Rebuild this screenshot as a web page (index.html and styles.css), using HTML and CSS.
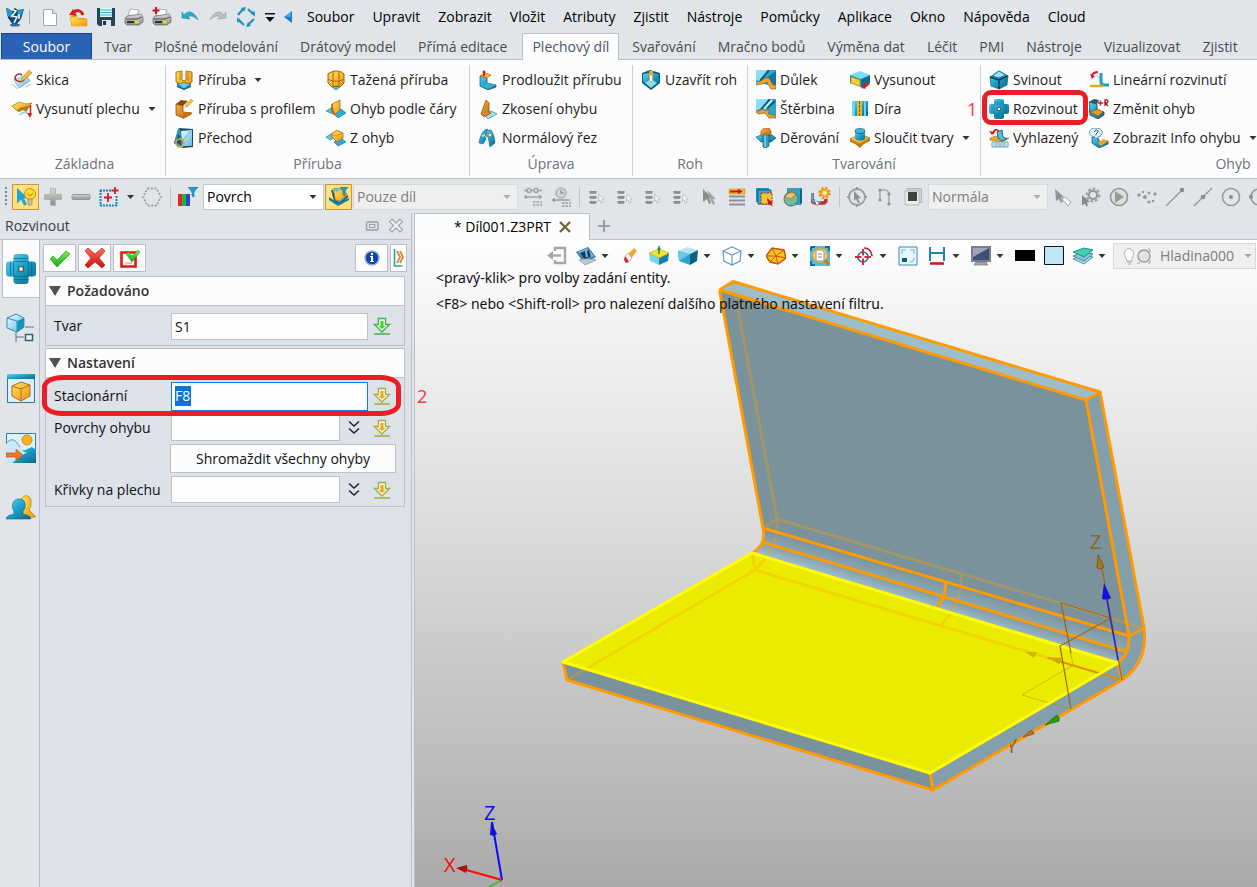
FILE: index.html
```html
<!DOCTYPE html>
<html lang="cs">
<head>
<meta charset="utf-8">
<title>Díl001.Z3PRT</title>
<link rel="stylesheet" href="styles.css">
</head>
<body>
<svg class="sprite" aria-hidden="true">
<defs>
<linearGradient id="b" x1="0" y1="0" x2="1" y2="1"><stop offset="0" stop-color="#5fd2f2"/><stop offset=".5" stop-color="#1a9ec6"/><stop offset="1" stop-color="#08678c"/></linearGradient>
<linearGradient id="lb" x1="0" y1="0" x2="1" y2="1"><stop offset="0" stop-color="#f4fcff"/><stop offset="1" stop-color="#5cb9dc"/></linearGradient>
<linearGradient id="y" x1="0" y1="0" x2="1" y2="1"><stop offset="0" stop-color="#ffe45c"/><stop offset="1" stop-color="#ee9412"/></linearGradient>
<linearGradient id="o" x1="0" y1="0" x2="1" y2="1"><stop offset="0" stop-color="#f8b03c"/><stop offset="1" stop-color="#b6670c"/></linearGradient>
<linearGradient id="g" x1="0" y1="0" x2="0" y2="1"><stop offset="0" stop-color="#d8d8d8"/><stop offset="1" stop-color="#8c8c8c"/></linearGradient>
<linearGradient id="gr" x1="0" y1="0" x2="0" y2="1"><stop offset="0" stop-color="#7dee4c"/><stop offset="1" stop-color="#0fae1c"/></linearGradient>
<linearGradient id="rd" x1="0" y1="0" x2="0" y2="1"><stop offset="0" stop-color="#ff6a5a"/><stop offset="1" stop-color="#c8120c"/></linearGradient>
</defs>
<symbol id="logo" viewBox="0 0 20 20"><path d="M1 1l6 2 3-2 3 2 6-1-3 10-5 6H8L3 11z" fill="#1b4a68"/><path d="M1 1l6 2 1 8-5-2zM13 3l6-1-4 8-3-1z" fill="#1e9bd2"/><path d="M5 2l6 2-4 5 5 1-3 6M14 7v5" stroke="#eef5f8" stroke-width="1.600" fill="none"/><ellipse cx="10" cy="18" rx="5" ry="1.500" fill="#2b6d94"/></symbol>
<symbol id="new" viewBox="0 0 20 20"><path d="M3.500 2.500h9l4 4v12h-13z" fill="#fff" stroke="#9aa6b0"/><path d="M12.500 2.500v4h4" fill="#dde6ec" stroke="#9aa6b0"/></symbol>
<symbol id="open" viewBox="0 0 20 20"><path d="M3 9h5l2 2h7v8H3z" fill="#e2970d"/><path d="M2 10h7l2 2h8v7H4z" fill="url(#y)" stroke="#e8a31c" stroke-width=".6"/><path d="M15 8C13 3 8 2 5 6" fill="none" stroke="#dc1b12" stroke-width="3"/><path d="M1 8l8 1-4-7z" fill="#dc1b12"/></symbol>
<symbol id="save" viewBox="0 0 20 20"><path d="M1 1h18v18H3l-2-2z" fill="#2a4256"/><path d="M4 1h12v9H4z" fill="#e8f7fd"/><path d="M4 3h12M4 5.500h12M4 8h12" stroke="#48a9cd"/><path d="M6 13h9v6H6z" fill="#dfe5ea"/><path d="M7 14h3v4H7z" fill="#1d3142"/></symbol>
<symbol id="print" viewBox="0 0 20 20"><path d="M6 2l9 1-2 6H4z" fill="#fff" stroke="#9a9a9a" stroke-width=".8"/><path d="M3 9l14-2 2 3v5l-4 3H3l-2-2v-5z" fill="url(#g)" stroke="#555" stroke-width=".6"/><path d="M2 12h11l5-2" stroke="#4c4c4c" fill="none"/><path d="M3 15h9" stroke="#333" stroke-width="2"/><ellipse cx="12.500" cy="15" rx="2.400" ry="1.500" fill="#f0dc18"/></symbol>
<symbol id="printp" viewBox="0 0 20 20"><path d="M6 2l9 1-2 6H4z" fill="#fff" stroke="#9a9a9a" stroke-width=".8"/><path d="M3 9l14-2 2 3v5l-4 3H3l-2-2v-5z" fill="url(#g)" stroke="#555" stroke-width=".6"/><path d="M2 12h11l5-2" stroke="#4c4c4c" fill="none"/><path d="M3 15h9" stroke="#333" stroke-width="2"/><ellipse cx="12.500" cy="15" rx="2.400" ry="1.500" fill="#f0dc18"/><path d="M4 0v7M.500 3.500h7" stroke="#d3141f" stroke-width="2"/></symbol>
<symbol id="undo" viewBox="0 0 20 20"><path d="M4 8c4-5 10-4 14 5-4-4-8-5-10-3l2 2-8-1V5z" fill="#2eaad2" stroke="#1789ae" stroke-width=".6"/></symbol>
<symbol id="redo" viewBox="0 0 20 20"><path d="M16 8C12 3 6 4 2 13c4-4 8-5 10-3l-2 2 8-1V5z" fill="#bcbfc2" stroke="#94989b" stroke-width=".6"/></symbol>
<symbol id="rotate" viewBox="0 0 20 20"><g fill="none" stroke="#1f95bb" stroke-width="2.200"><path d="M2 8L7 2M12 2l6 6M18 12l-6 6M8 18l-6-6"/></g><path d="M5 1l5-1-2 5zM15 4l4 1v5zM15 19l-5 1 2-5zM5 16l-4-1v-5z" fill="#1f95bb"/></symbol>
<symbol id="qdrop" viewBox="0 0 20 20"><path d="M5 6h10v1.500H5zM5.500 10h9L10 15z" fill="#111"/></symbol>
<symbol id="left" viewBox="0 0 20 20"><path d="M14 4v12l-8-6z" fill="#1976c8"/><path d="M13 5v5H7z" fill="#36a9f0"/></symbol>
<symbol id="sketch" viewBox="0 0 20 20"><path d="M2 10l12-5 4 6-11 7z" fill="url(#lb)" stroke="#77a9c0" stroke-width=".7"/><path d="M0 14l6 5M14 17l5-3" stroke="#9ab7c4"/><path d="M10 5C6 2 1 7 4 10s8 1 8-1" fill="none" stroke="#a02c28" stroke-width="1.600"/><path d="M8 12l2-4 7-8 3 3-8 7z" fill="url(#y)" stroke="#b06a12" stroke-width=".5"/></symbol>
<symbol id="sheet" viewBox="0 0 20 20"><path d="M0 7l7-4 7 2 6-1-6 5-6 1-3 2z" fill="url(#y)" stroke="#9a5a10" stroke-width=".6"/><path d="M5 12l3-3 7-2 4-1-5 7-3-2-4 2z" fill="#b97a24"/><path d="M6 17l4-4 5-1 1 3-3-1z" fill="#a8c4ce"/><path d="M18.500 6v11" stroke="#cf2020" stroke-width="1.500"/><path d="M15 14h5l-2 5z" fill="#cf2020"/></symbol>
<symbol id="flange" viewBox="0 0 20 20"><path d="M3 14l7-3 7 3-7 5z" fill="#5fd0ee" stroke="#0c627f"/><path d="M3 15v2l7 3 7-3v-2l-7 4z" fill="#0a5f7d"/><path d="M2 2l6-1v9l2 1 2-1V1l6 1v10l-4 2-4-2-4 2-4-2z" fill="url(#y)" stroke="#9d5c0c" stroke-width=".8"/><path d="M6 1v9M14 1v9" stroke="#c88220"/></symbol>
<symbol id="flangep" viewBox="0 0 20 20"><path d="M2 5l7 2v6l9 1-9 5-7-3z" fill="url(#o)" stroke="#7f430a" stroke-width=".7"/><path d="M9 14l8-1v3l-8 4z" fill="#c7720f"/><path d="M2 5l5-4 7 1-5 5z" fill="#8a480c"/><path d="M11 7l6-7 2 2-6 6z" fill="#f8c83b" stroke="#b06a12" stroke-width=".5"/></symbol>
<symbol id="trans" viewBox="0 0 20 20"><path d="M5 0l14 1v18l-10 1L0 15z" fill="#124d6b"/><path d="M7 3l11-1v16H8z" fill="url(#lb)"/><path d="M5 1L1 15l8 4M5 1l3 15" stroke="#2d93b9" stroke-width="2" fill="none"/><circle cx="6" cy="15" r="4" fill="none" stroke="#eba423" stroke-width="1.600"/><path d="M9 12l8-9" stroke="#5fb0cc"/></symbol>
<symbol id="swept" viewBox="0 0 20 20"><path d="M5 16l5-2 5 2-5 4z" fill="#4cbede" stroke="#0d637f" stroke-width=".6"/><path d="M2 4c5-4 12-4 16 0v9l-4 4q-4-2-8 0l-4-4z" fill="url(#y)" stroke="#9d5c0c"/><path d="M7 2v14M13 2v14M2 9c5 3 11 3 16 0" stroke="#a96710" fill="none"/></symbol>
<symbol id="bendline" viewBox="0 0 20 20"><path d="M0 12l7-4 3 4-3 3z" fill="#58c3de" stroke="#0e7798" stroke-width=".6"/><path d="M7 14l8-4 5 4-8 5z" fill="#2cacd4" stroke="#0e6c8a" stroke-width=".6"/><path d="M6 5l8-4v10l-6 5z" fill="url(#y)" stroke="#9d5c0c" stroke-width=".7"/><path d="M6 5v7l3 4" stroke="#b36410" stroke-width="1.500" fill="none"/></symbol>
<symbol id="zbend" viewBox="0 0 20 20"><path d="M0 9l7-4 4 4-7 3z" fill="#68c5de" stroke="#0e7798" stroke-width=".6"/><path d="M8 14l7-4 5 4-8 4z" fill="#2cacd4" stroke="#0e6c8a" stroke-width=".6"/><path d="M5 6l6-4 6 3v5l-6 4-4-4z" fill="url(#y)" stroke="#9d5c0c" stroke-width=".7"/><path d="M5 6l5 2 7-3" stroke="#d99325" fill="none"/></symbol>
<symbol id="extend" viewBox="0 0 20 20"><path d="M2 6l7 2v5l9 2v2l-8 3-8-4z" fill="url(#b)" stroke="#0a536f" stroke-width=".7"/><path d="M9 13l9 2-8 4-6-3z" fill="#39afd3"/><path d="M2 6l5-3 6 2-4 3z" fill="#f3b92c" stroke="#9d5c0c" stroke-width=".6"/><path d="M5 1h2v5H5z" fill="#d51c22"/><path d="M2 5l4-5 4 5z" fill="#d51c22" transform="translate(3 0) scale(.5)"/></symbol>
<symbol id="taper" viewBox="0 0 20 20"><path d="M6 15l7-3 6 3-9 5z" fill="#a5dcf0" stroke="#2f87a8" stroke-width=".7"/><path d="M8 1l3 3v9l2 1-7 4-3-3z" fill="url(#o)" stroke="#8a480c" stroke-width=".7"/><path d="M3 15l5-3 4 2-6 4z" fill="#d5852a"/></symbol>
<symbol id="normal" viewBox="0 0 20 20"><path d="M1 15C2 8 5 2 9 1l2 2-4 5 1 3-3 5z" fill="url(#b)" stroke="#0a536f" stroke-width=".5"/><path d="M9 2l4 0c2 3 4 8 4 13l-5 4-2-10-2-1z" fill="url(#b)" stroke="#0a536f" stroke-width=".5"/><circle cx="12" cy="7" r="1.800" fill="#ffe2bb" stroke="#9d5c0c" stroke-width=".6"/><path d="M4 8l3-1" stroke="#e9d1a3" stroke-width="2"/></symbol>
<symbol id="corner" viewBox="0 0 20 20"><path d="M1 3l8-3 10 3v10l-9 7-9-7z" fill="#075a7d"/><path d="M2 4l6-1v7l2 2 2-2V3l6 1v8l-8 5-8-5z" fill="url(#b)"/><path d="M4 13l6-4 6 4-6 5z" fill="#8bd9f2"/><path d="M8 1h4v9l-2 2-2-2z" fill="#f2a722"/><path d="M9 6l1-1 1 1v5H9z" fill="#fff"/></symbol>
<symbol id="dimple" viewBox="0 0 20 20"><path d="M0 0h20v17L0 12z" fill="#2aa6cf"/><path d="M0 0h13L4 11l-4-1z" fill="#8edcf3"/><path d="M13 0L4 11" stroke="#0a5d80" stroke-width="2"/><path d="M20 1L9 9l5 4 6 3z" fill="#16779d"/><path d="M0 13l5-2 4-3h4l4 7h3v4h-5l-4-7-5 2-6 1z" fill="#f1a724" stroke="#7a5a38" stroke-width=".6"/></symbol>
<symbol id="louver" viewBox="0 0 20 20"><path d="M0 0h20v17L0 12z" fill="#2aa6cf"/><path d="M0 0h13L4 10l-4 1z" fill="#8edcf3"/><path d="M14 0L5 11M19 2l-8 7" stroke="#075676" stroke-width="2"/><path d="M16 1L8 10" stroke="#c5ecf6" stroke-width="2"/><path d="M0 13l7-3 2 2 5-2-2 4 3 2h5v3h-7l-4-5-7 1z" fill="#eaa329" stroke="#74614c" stroke-width=".7"/></symbol>
<symbol id="punch" viewBox="0 0 20 20"><path d="M0 9l5-2h11l4 3-5 4H5z" fill="url(#b)" stroke="#075676" stroke-width=".6"/><path d="M5 8V3l3-3h5l2 3v5l-2 1V6H8v4z" fill="url(#o)" stroke="#8a480c" stroke-width=".6"/><path d="M7 7h6v11l-3 2-3-1z" fill="#2f9cc2" stroke="#09506d" stroke-width=".6"/><path d="M9 7v12" stroke="#b6e9f8"/></symbol>
<symbol id="extrude" viewBox="0 0 20 20"><path d="M0 5l10-4 10 4-9 4z" fill="#79dcf6"/><path d="M0 5l11 4v8L0 13z" fill="#1a8fb5"/><path d="M1 7l9 3v6l-9-3z" fill="#facd2e" stroke="#d58b16" stroke-width=".6"/><path d="M11 9l9-4v8l-9 4z" fill="#0b7094"/><path d="M17 12l3 2-5 4 1 1-5-1 2-4 1 1z" fill="#d51f28"/></symbol>
<symbol id="hole" viewBox="0 0 20 20"><path d="M2 2h16v15H2z" fill="url(#b)"/><path d="M2 2h3v15H2zM14 2h2v15h-2z" fill="#68d6f3"/><path d="M7 2h5v15H7z" fill="#e9b629"/><path d="M9.500 2v15" stroke="#7b5b12" stroke-dasharray="3 1"/></symbol>
<symbol id="merge" viewBox="0 0 20 20"><path d="M0 11l10-5 10 4-10 6z" fill="url(#y)" stroke="#a8650f" stroke-width=".7"/><path d="M0 11l10 5 10-6v3l-6 3-4 4-5-4-5-2z" fill="#c57911"/><path d="M5 3h10v8c-3 2-7 2-10 0z" fill="url(#b)"/><ellipse cx="10" cy="3" rx="5" ry="2.500" fill="#39b3d7" stroke="#09506d" stroke-width=".6"/></symbol>
<symbol id="fold" viewBox="0 0 20 20"><path d="M1 7l9-6 9 5-1 9-8 4-8-3z" fill="url(#b)" stroke="#0a536f" stroke-width=".6"/><path d="M3 6l7-5 7 4-7 3z" fill="#9bdff2" stroke="#187998"/><path d="M1 7l9 3 9-4M10 10v9" stroke="#063d55" stroke-width="1.500" fill="none"/></symbol>
<symbol id="unfold" viewBox="0 0 20 20"><path d="M7 0h6q2 0 2 2v3h3q2 0 2 2v6q0 2-2 2h-3v3q0 2-2 2H7q-2 0-2-2v-3H2q-2 0-2-2V7q0-2 2-2h3V2q0-2 2-2z" fill="url(#b)"/><path d="M5 5h10v10H5zM3 5v10M17 5v10M5 3h10M5 17h10" fill="none" stroke="#0a6282" stroke-width=".6" opacity=".7"/><path d="M8.500 8.500h3v3h-3z" fill="#fff" stroke="#444" stroke-width=".8"/></symbol>
<symbol id="smooth" viewBox="0 0 20 20"><path d="M4 6C5 1 8 1 10 3" stroke="#d21c1c" stroke-width="1.600" fill="none"/><path d="M0 3l6 1-3 3z" fill="#d21c1c"/><path d="M1 10l6-2 6 2 7 0-7 4-12-2z" fill="#eda729" stroke="#a8650f" stroke-width=".6"/><path d="M8 4l5-2 1 7 4 2-5 2-4-3z" fill="#5cb9d6" stroke="#0b6482" stroke-width=".9"/><path d="M3 14h16v5H3z" fill="#d8eaf3" stroke="#6f98ac"/><path d="M5 16h12M5 18h12" stroke="#79a9bd"/></symbol>
<symbol id="linear" viewBox="0 0 20 20"><path d="M8 4l6 10" stroke="#d3e6ed" stroke-width="2.500"/><path d="M12 3v9q0 3 4 3h4" stroke="#219fca" stroke-width="3" fill="none"/><path d="M1 16h13" stroke="#f0a51f" stroke-width="2.500"/><path d="M3 5Q5 2 9 2" stroke="#d31f28" stroke-width="2" fill="none"/><path d="M1 4l5 2-3 3z" fill="#d31f28"/></symbol>
<symbol id="chg" viewBox="0 0 20 20"><path d="M0 3l8 2v7l7 1v3l-6 4-8-4z" fill="url(#b)" stroke="#333" stroke-width=".8"/><path d="M1 13l8-3 5 3-5 4z" fill="#ec9d25" stroke="#7f430a" stroke-width=".6"/><path d="M0 3l5-3 5 1-2 4z" fill="#245a74"/><path d="M9 4h5M11.500 1.500v5" stroke="#d31f28" stroke-width="1.400"/><path d="M16 7V1h2q2 1 0 3h-2l3 3" fill="none" stroke="#b3131d" stroke-width="1.300"/></symbol>
<symbol id="info" viewBox="0 0 20 20"><path d="M3 9l7 2v3l9-1v3l-9 4-7-5z" fill="url(#b)" stroke="#084b65" stroke-width=".7"/><path d="M9 15l5-4 5 2-7 5z" fill="#eda22a"/><path d="M7 0c8 0 8 8 2 9l-3 3V9C-2 8-1 0 7 0z" fill="#e4f6fc" stroke="#4494b0"/><path d="M5.500 4q0-2 2-2t1.500 2L7 6v1.500" fill="none" stroke="#22536a"/></symbol>
<symbol id="pick" viewBox="0 0 20 20"><path d="M1 1l11 10-4 .5 3 6-3 1-3-6-4 4z" fill="#1ba7e1"/><circle cx="14" cy="7" r="5.500" fill="#ffd936" stroke="#d28a12"/><path d="M11 7l3 2 3-3" stroke="#c77812" fill="none"/><path d="M12 12h4v5l-2 1.500-2-1z" fill="#c7c0aa" stroke="#9a7b30" stroke-width=".7"/></symbol>
<symbol id="plus" viewBox="0 0 20 20"><path d="M7.500 1.500h5v6h6v5h-6v6h-5v-6h-6v-5h6z" fill="url(#g)" stroke="#b4b4b4"/></symbol>
<symbol id="minus" viewBox="0 0 20 20"><rect x="1" y="7.500" width="18" height="5" rx="1" fill="url(#g)" stroke="#999"/></symbol>
<symbol id="dsel" viewBox="0 0 20 20"><path d="M1.500 3v16M1 18.500h17M17.500 9v10M1 3.500h11" fill="none" stroke="#1688ad" stroke-width="2" stroke-dasharray="2 1"/><path d="M9 6v9M5 10.500h8M16 0v7M12.500 3.500h7" stroke="#cc1f2b" stroke-width="1.800"/></symbol>
<symbol id="dcirc" viewBox="0 0 20 20"><path d="M5.500 1.500h9L19 10l-4.500 8.500h-9L1 10z" fill="none" stroke="#9c9c9c" stroke-width="1.800" stroke-dasharray="2 1.500"/></symbol>
<symbol id="rgb" viewBox="0 0 20 20"><path d="M0 7h4v12H0z" fill="#e02424"/><path d="M4 7h4v12H4z" fill="#24b532"/><path d="M8 7h4v12H8z" fill="#2a45d0"/><path d="M10 0h10l-4 5v5l-2-1V5z" fill="#219fd2" stroke="#0b6f9a" stroke-width=".6"/></symbol>
<symbol id="layerbtn" viewBox="0 0 20 20"><path d="M3 3l3 11 5 2 8-7" fill="none" stroke="#116887" stroke-width="2"/><path d="M0 13l9 6 11-6v-2l-11 5-9-6z" fill="#0f7fa5"/><path d="M5 2h10l3 6-7 6-5-1z" fill="url(#y)" stroke="#8d5a0b" stroke-width=".6"/><path d="M3 1h8L8 5z" fill="#57b6d2"/><path d="M11 0h8l-3 4v5l-2-1V4z" fill="#229dc2" stroke="#0b6f9a" stroke-width=".5"/></symbol>
<symbol id="gref1" viewBox="0 0 20 20"><g stroke="#a2a2a2" fill="none" stroke-width="1.500"><circle cx="6" cy="3.500" r="2"/><circle cx="13" cy="3.500" r="2"/><path d="M1 3.500h3M8 3.500h3M15 3.500h4M1 10h18M3 8v4M17 8v4"/><path d="M10 15h9M10 18h9" stroke-dasharray="2.500 1"/></g></symbol>
<symbol id="gref2" viewBox="0 0 20 20"><circle cx="10" cy="6" r="5" fill="#d5d5d5" stroke="#b0b0b0" stroke-width="1.500"/><path d="M10 3v3h3M1 13h18M3 11v4" stroke="#999" stroke-width="1.500" fill="none"/><path d="M11 16h9M11 19h9" stroke="#999" stroke-width="1.500" stroke-dasharray="2.500 1"/></symbol>
<symbol id="glist" viewBox="0 0 20 20"><path d="M3 4h6v3H3zM3 9h6v3H3zM3 14h6v3H3z" fill="#9a9a9a"/><path d="M2 5h8M2 10h8M2 15h8" stroke="#858585"/><path d="M12 7l5 5-2 .5 1 3-2 .5-1-3-1.500 1z" fill="#f3f3f3" stroke="#b5b5b5" stroke-width=".8"/></symbol>
<symbol id="gcur" viewBox="0 0 20 20"><path d="M4 2l9 9h-3l2 5-2 1-2-5-4 3z" fill="#8c8c8c"/><path d="M8 3l9 9h-3l2 5-2 1-3-6z" fill="#a5a5a5"/></symbol>
<symbol id="rlist" viewBox="0 0 20 20"><path d="M2 2h16v5H2z" fill="#f5c331" stroke="#a87616" stroke-width=".5"/><path d="M3 4.500h9" stroke="#c9151c" stroke-width="2"/><path d="M11 2l5 2.500L11 7z" fill="#c9151c"/><path d="M2 9.500h16M2 13.500h16M2 17.500h16" stroke="#8a9297" stroke-width="2"/></symbol>
<symbol id="rsel" viewBox="0 0 20 20"><path d="M1 1h13v14H1z" fill="#1493bd"/><path d="M3 3h13v14H3z" fill="#2fb1d8" stroke="#0b5e7e"/><path d="M6 6h11v11H6z" fill="#f7c633" stroke="#c81818" stroke-dasharray="2 1"/><path d="M12 11l6 5-2 .5 2 3-2-1-2-2-1 1z" fill="#c81818"/></symbol>
<symbol id="rball" viewBox="0 0 20 20"><path d="M4 1h15v15l-2 2H4z" fill="#2aa3c9"/><path d="M19 1v15l-2 2V3z" fill="#0d6384"/><circle cx="8" cy="12" r="7" fill="#79b9a0" stroke="#4a705f"/><path d="M2 10Q6 3 13 7L8 12z" fill="#edc168" stroke="#a06a2a" stroke-width=".7"/><path d="M6 5l5-4 2 2" stroke="#b5732c" fill="none"/></symbol>
<symbol id="rgear" viewBox="0 0 20 20"><path d="M1 6v6q0 4 4 4h7q3 0 3-4" fill="none" stroke="#c42b31" stroke-width="3.500"/><path d="M1 6v5q0 4 4 4h5" fill="none" stroke="#43a5cb" stroke-width="2"/><circle cx="13.500" cy="6" r="5" fill="none" stroke="#e59a18" stroke-width="2.500" stroke-dasharray="2.500 1.400"/><circle cx="13.500" cy="6" r="3.300" fill="#fce6a0" stroke="#e59a18" stroke-width="1.600"/><path d="M3 12l5 4-2 3z" fill="#fff" stroke="#777" stroke-width=".5"/></symbol>
<symbol id="gtarget" viewBox="0 0 20 20"><circle cx="10" cy="10" r="8" fill="none" stroke="#9a9a9a" stroke-width="1.800"/><path d="M10 0v3M10 17v3M0 10h3M17 10h3" stroke="#9a9a9a" stroke-width="2"/><path d="M7 4l7 7-3 .5 2 4-2 .5-2-4-2 2z" fill="#8f8f8f"/></symbol>
<symbol id="gcurve" viewBox="0 0 20 20"><path d="M5 2v12M5 3h4q5 0 5 5v9" fill="none" stroke="#aaa" stroke-width="1.600"/><g fill="#8f8f8f"><circle cx="5" cy="3" r="1.600"/><circle cx="5" cy="13" r="1.600"/><circle cx="14" cy="7" r="1.600"/><circle cx="14" cy="17" r="1.600"/></g></symbol>
<symbol id="gsq" viewBox="0 0 20 20"><path d="M4.500 1.500h14v14h-14z" fill="#d2d2d2" stroke="#b0b0b0"/><path d="M2 4h14v14H2z" fill="#ececec" stroke="#b8b8b8"/><path d="M5 5h9v9H5z" fill="#424242"/></symbol>
<symbol id="gpen" viewBox="0 0 20 20"><path d="M2 2l9 8-3 1 2 4-2 1-2-4-3 2z" fill="#949494"/><path d="M9 12l3-2 6 5-3 4z" fill="#fff" stroke="#a1a1a1"/></symbol>
<symbol id="ggear" viewBox="0 0 20 20"><circle cx="12" cy="8" r="6" fill="none" stroke="#a8a8a8" stroke-width="3" stroke-dasharray="2.800 1.700"/><circle cx="12" cy="8" r="4" fill="#e6e6e6" stroke="#999" stroke-width="2"/><path d="M1 8l8 7-3 .5 1 3-2 1-1-3-3 2z" fill="#8b8b8b"/></symbol>
<symbol id="gplay" viewBox="0 0 20 20"><circle cx="10" cy="10" r="8.500" fill="#dedede" stroke="#949494" stroke-width="1.600"/><path d="M6 4v12l9-6z" fill="#9a9a9a"/></symbol>
<symbol id="gdots" viewBox="0 0 20 20"><g fill="#999"><circle cx="2" cy="8" r="1.700"/><circle cx="6" cy="5" r="1.200"/><circle cx="8" cy="10" r="2"/><circle cx="12" cy="6" r="1.500"/><circle cx="18" cy="7" r="1.700"/><circle cx="12" cy="15" r="1.600"/><circle cx="16" cy="14" r="1.300"/></g></symbol>
<symbol id="gline" viewBox="0 0 20 20"><path d="M1 19L17 3" stroke="#999" stroke-width="1.500"/><circle cx="17" cy="3" r="2.300" fill="#8b8b8b"/></symbol>
<symbol id="gmid" viewBox="0 0 20 20"><path d="M1 19L19 1" stroke="#999" stroke-width="1.500"/><circle cx="10" cy="10" r="2.300" fill="#8b8b8b"/></symbol>
<symbol id="gcen" viewBox="0 0 20 20"><circle cx="10" cy="10" r="8.500" fill="none" stroke="#999" stroke-width="1.600"/><circle cx="10" cy="10" r="2" fill="#8b8b8b"/></symbol>
<symbol id="gquad" viewBox="0 0 20 20"><circle cx="10" cy="10" r="8" fill="none" stroke="#999" stroke-width="1.600"/><circle cx="2" cy="10" r="2" fill="#8b8b8b"/></symbol>
<symbol id="restore" viewBox="0 0 20 20"><rect x="4.500" y="6" width="11.500" height="8" rx="1" fill="none" stroke="#9b9fa3" stroke-width="1.400"/><rect x="7.500" y="8.500" width="5.500" height="3" fill="none" stroke="#9b9fa3"/></symbol>
<symbol id="close" viewBox="0 0 20 20"><path d="M6 5.500l8 8M14 5.500l-8 8" stroke="#a2a6aa" stroke-width="4.600" stroke-linecap="square"/><path d="M6 5.500l8 8M14 5.500l-8 8" stroke="#f1f2f3" stroke-width="2.200" stroke-linecap="square"/></symbol>
<symbol id="check" viewBox="0 0 20 20"><path d="M0 11l3-3 4 4 9-9 4 3L7 19z" fill="url(#gr)" stroke="#128c15" stroke-width=".6"/></symbol>
<symbol id="cross" viewBox="0 0 20 20"><path d="M0 3l3-3 7 6 7-6 3 3-6 7 6 7-3 3-7-6-7 6-3-3 6-7z" fill="url(#rd)" stroke="#a81410" stroke-width=".6"/></symbol>
<symbol id="boxcheck" viewBox="0 0 20 20"><path d="M1.500 4.500h14v14h-14z" fill="#fff" stroke="#e21717" stroke-width="2.600"/><path d="M5 14h7v2H5z" fill="#f6bcb8"/><path d="M6 6l3-2 3 4 6-6 2 2-8 10z" fill="url(#gr)" stroke="#128c15" stroke-width=".5"/></symbol>
<symbol id="iinfo" viewBox="0 0 20 20"><circle cx="10" cy="10" r="7" fill="#0e43b0" stroke="#9db0cc" stroke-width="1.500"/><path d="M8 8h3v5h1v1H8v-1h1V9H8z" fill="#fff"/><circle cx="10" cy="6" r="1.200" fill="#fff"/></symbol>
<symbol id="lchev" viewBox="0 0 12 20"><path d="M1.500 1v17h8" fill="none" stroke="#2a9fc4" stroke-width="1.600"/><path d="M4 3l3 6-3 6M7 3l3 6-3 6" stroke="#d58a2e" stroke-width="1.800" fill="none"/></symbol>
<symbol id="dl" viewBox="0 0 20 20"><path d="M6.500 2.500h7v6h4L10 16 2.500 8.500h4z" fill="#f6f8e8" stroke="currentColor" stroke-width="1.300"/><path d="M8.500 5h3v5h2L10 13 6.500 10h2z"/><path d="M2 18h16" stroke="currentColor" stroke-width="1.500"/></symbol>
<symbol id="chev" viewBox="0 0 20 20"><path d="M5 3.500l5 4.500 5-4.500M5 10.500l5 4.500 5-4.500" fill="none" stroke="#222" stroke-width="1.500"/></symbol>
<symbol id="tri" viewBox="0 0 10 10"><path d="M1.500 3h7L5 7z" fill="currentColor"/></symbol>
<symbol id="bigtri" viewBox="0 0 16 16"><path d="M2 3h12L8 13z" fill="currentColor"/></symbol>
<symbol id="tree" viewBox="0 0 30 30"><path d="M1 5l9-4 8 4v9l-7 5-10-4z" fill="url(#lb)" stroke="#2d90b5"/><path d="M11 8l7-3v9l-7 5z" fill="#1493bb"/><path d="M1 5l10 3v11" fill="none" stroke="#2d90b5"/><path d="M19 14h9M10 19v10M10 24h8" stroke="#52788a"/><path d="M19.500 21.500h7v6h-7z" fill="#eef4f7" stroke="#2e6280" stroke-width="1.500"/></symbol>
<symbol id="winbox" viewBox="0 0 30 30"><path d="M1.500 1.500h27v28h-27z" fill="#d8f0fa" stroke="#39788f"/><path d="M1 1h28v5H1z" fill="url(#b)"/><path d="M6 13l9-4 9 3v11l-9 5-9-5z" fill="url(#y)" stroke="#c0651c"/><path d="M6 13l9 3 9-4M15 16v12" stroke="#c0651c" fill="none"/></symbol>
<symbol id="scene" viewBox="0 0 30 30"><path d="M.500.500h29v29H.500z" fill="#ddf2fb" stroke="#367b96"/><path d="M14 15c4 5 8 0 12-1l4 3v13H0z" fill="url(#b)"/><path d="M0 11C5 4 9 6 14 14c3 5 4 5 7 5L6 30H0z" fill="#c9e9f6"/><path d="M0 11C5 4 9 6 14 14" fill="none" stroke="#5a93aa"/><circle cx="21" cy="7" r="5" fill="#f9b520" stroke="#d98217"/><path d="M0 20h10v-4l7 6-7 6v-4H0z" fill="#ea7a24" stroke="#b94a13" stroke-width=".6"/></symbol>
<symbol id="users" viewBox="0 0 30 30"><path d="M14 12c0-12 12-12 11-2 0 4-1 5-2 7l7 7H16z" fill="url(#y)" stroke="#d2861b"/><path d="M0 26c1-4 5-4 8-5v-3c-4-6 0-13 6-12 5 0 7 7 3 12v3c3 1 7 1 8 5z" fill="url(#b)" stroke="#0c6684" stroke-width=".6"/></symbol>
<symbol id="exit" viewBox="0 0 20 20"><path d="M8 5V2h10v15H8v-3" fill="none" stroke="#a6a6a6" stroke-width="2.400"/><path d="M14 9.500H4" stroke="#a6a6a6" stroke-width="2.400"/><path d="M0 9.500L6 5v9z" fill="#a6a6a6"/></symbol>
<symbol id="views" viewBox="0 0 20 20"><path d="M0 6l12-5 8 10-12 6z" fill="#37779a"/><path d="M2 6l9-4 7 8-9 5z" fill="#75b8d8"/><path d="M4 7l5-2 1 6 2 0-1-6 2-1 2 7-7 2z" fill="#123f63"/><path d="M3 14l4-1 9 0 4 1-11 5z" fill="#b8cdd7" stroke="#688" stroke-width=".6"/></symbol>
<symbol id="eraser" viewBox="0 0 20 20"><path d="M6 10l8-8 3 3-7 9z" fill="#f3a82c"/><path d="M5 10l3-3 4 5-3 4z" fill="#eef3f8" stroke="#889" stroke-width=".5"/><path d="M5 10l4 6-3 1-2-3z" fill="#d62424"/></symbol>
<symbol id="topface" viewBox="0 0 20 20"><path d="M0 7l10 5v7L1 15z" fill="#7ad3f0"/><path d="M10 12l10-5-1 8-9 4z" fill="#1185ac"/><path d="M0 7l10-4 10 4-10 5z" fill="#fbe334" stroke="#b39c15" stroke-width=".6"/><path d="M10 8V0M8.500 3h3" stroke="#21852c" stroke-width="1.500"/></symbol>
<symbol id="shade" viewBox="0 0 20 20"><path d="M0 5l9-4 11 3-9 4z" fill="#b6e6f6"/><path d="M0 5l12 3v11L1 15z" fill="#2ba6d3"/><path d="M12 8l8-4-1 11-7 4z" fill="#0d5f89"/><path d="M0 5l12 3-11 7z" fill="#6bc6e6"/></symbol>
<symbol id="wire" viewBox="0 0 20 20"><path d="M1 5l9-4 9 4-1 10-8 4-8-4zM1 5l9 4 9-4M10 9v10" fill="#fff" stroke="#6a98ba" stroke-width="1.200"/></symbol>
<symbol id="mesh" viewBox="0 0 20 20"><path d="M0 10l6-8 12 2 2 8-8 6-8-2z" fill="#f9c41d" stroke="#c5540d" stroke-width="1.500"/><path d="M6 2l4 8 8-6M10 10l10 2M10 10l2 8M10 10l-6 6M10 10H0" stroke="#c5540d" fill="none"/></symbol>
<symbol id="zoomp" viewBox="0 0 20 20"><path d="M0 0h20v20H0z" fill="#55bde0"/><path d="M1 1h4M1 1v4M15 1h4v4M1 15v4h4" stroke="#086f98" stroke-width="2" fill="none"/><circle cx="10" cy="9.500" r="7.500" fill="#f5d067" stroke="#d99a20"/><path d="M6 4h6l2 2v9H6z" fill="#fff" stroke="#8795a0"/><path d="M8 8h4M8 11h4" stroke="#889"/><path d="M15 14l4 5" stroke="#bd7c22" stroke-width="3"/></symbol>
<symbol id="pivot" viewBox="0 0 20 20"><circle cx="9" cy="11" r="5" fill="none" stroke="#1c7899" stroke-width="1.600"/><path d="M9 3v16M1 11h16" stroke="#dc2630" stroke-width="2"/><path d="M9 9l2 2-2 2-2-2z" fill="#fff"/><path d="M10 2q7 0 8 8" fill="none" stroke="#b9232a" stroke-width="1.600"/></symbol>
<symbol id="fit" viewBox="0 0 20 20"><path d="M1 1h18v18H1z" fill="#e7f7fd" stroke="#3a8baa"/><path d="M4 12h5v4H4z" fill="#14587a"/><path d="M4 8V4h4M12 4h4v4M16 12q0 4-4 4" stroke="#8ecbe1" stroke-width="1.500" fill="none"/></symbol>
<symbol id="dim" viewBox="0 0 20 20"><path d="M3 1v14M17 1v14M4 7h12" stroke="#1f88ad" stroke-width="2"/><path d="M3 17.500h14" stroke="#cc1b24" stroke-width="2.600"/></symbol>
<symbol id="screen" viewBox="0 0 20 20"><path d="M0 0h20v16H0z" fill="#7c7f86"/><path d="M2 2h16v12H2z" fill="#3e4f78"/><path d="M2 2h16L2 11z" fill="#9aa6c2"/><path d="M5 16h10l2 3H3z" fill="#a3a5a8" stroke="#66696c" stroke-width=".6"/></symbol>
<symbol id="black" viewBox="0 0 20 20"><path d="M0 4h20v11H0z" fill="#000"/></symbol>
<symbol id="light" viewBox="0 0 20 20"><path d="M.500.500h19v18H.500z" fill="#bfe6f5" stroke="#111"/></symbol>
<symbol id="layers" viewBox="0 0 20 20"><path d="M0 13l10-4 10 2-9 7z" fill="#a9d5e2" stroke="#5897ad"/><path d="M0 10l10-4 10 2-9 7z" fill="#8bc7d9" stroke="#3f8ba6"/><path d="M0 6l11-4 9 2-9 7z" fill="#42cdb2" stroke="#18967d"/></symbol>
<symbol id="bulb" viewBox="0 0 30 20"><path d="M5 12Q2 8 4 5q4-5 8 0 2 3-1 7v3H6z" fill="#fff" stroke="#b2b2b2"/><path d="M6 16h5M7 18h3" stroke="#aaa"/><circle cx="23" cy="10" r="6" fill="#e3e3e3" stroke="#999" stroke-width="1.300"/><path d="M16 17h3M27 3h2v3M27 17h2v-3" stroke="#aaa" fill="none"/></symbol>
</svg>

<header class="quick">
<svg class="slot"><use href="#logo"/></svg><i class="qsep"></i>
<button class="slot" aria-label="Nový"><svg><use href="#new"/></svg></button>
<button class="slot" aria-label="Otevřít"><svg><use href="#open"/></svg></button>
<button class="slot" aria-label="Uložit"><svg><use href="#save"/></svg></button>
<button class="slot" aria-label="Tisk"><svg><use href="#print"/></svg></button>
<button class="slot" aria-label="Rychlý tisk"><svg><use href="#printp"/></svg></button>
<button class="slot" aria-label="Zpět"><svg><use href="#undo"/></svg></button>
<button class="slot" aria-label="Znovu"><svg><use href="#redo"/></svg></button>
<button class="slot" aria-label="Regenerovat"><svg><use href="#rotate"/></svg></button>
<button class="slot narrow" aria-label="Přizpůsobit"><svg><use href="#qdrop"/></svg></button>
<button class="slot narrow" aria-label="Sbalit nabídku"><svg><use href="#left"/></svg></button>
<nav class="menu"><a href="#">Soubor</a><a href="#">Upravit</a><a href="#">Zobrazit</a><a href="#">Vložit</a><a href="#">Atributy</a><a href="#">Zjistit</a><a href="#">Nástroje</a><a href="#">Pomůcky</a><a href="#">Aplikace</a><a href="#">Okno</a><a href="#">Nápověda</a><a href="#">Cloud</a></nav>
</header>

<nav class="tabs"><button class="file">Soubor</button><button>Tvar</button><button>Plošné modelování</button><button>Drátový model</button><button>Přímá editace</button><button class="on">Plechový díl</button><button>Svařování</button><button>Mračno bodů</button><button>Výměna dat</button><button>Léčit</button><button>PMI</button><button>Nástroje</button><button>Vizualizovat</button><button>Zjistit</button></nav>

<section class="ribbon">
<div class="group g-base"><div class="cols">
<div class="col"><button><svg><use href="#sketch"/></svg>Skica</button><button><svg><use href="#sheet"/></svg>Vysunutí plechu<svg class="tri"><use href="#tri"/></svg></button></div>
</div><h2>Základna</h2></div>
<div class="group g-flange"><div class="cols">
<div class="col"><button><svg><use href="#flange"/></svg>Příruba<svg class="tri"><use href="#tri"/></svg></button><button><svg><use href="#flangep"/></svg>Příruba s profilem</button><button><svg><use href="#trans"/></svg>Přechod</button></div>
<div class="col"><button><svg><use href="#swept"/></svg>Tažená příruba</button><button><svg><use href="#bendline"/></svg>Ohyb podle čáry</button><button><svg><use href="#zbend"/></svg>Z ohyb</button></div>
</div><h2>Příruba</h2></div>
<div class="group g-edit"><div class="cols">
<div class="col"><button><svg><use href="#extend"/></svg>Prodloužit přírubu</button><button><svg><use href="#taper"/></svg>Zkosení ohybu</button><button><svg><use href="#normal"/></svg>Normálový řez</button></div>
</div><h2>Úprava</h2></div>
<div class="group g-corner"><div class="cols">
<div class="col"><button><svg><use href="#corner"/></svg>Uzavřít roh</button></div>
</div><h2>Roh</h2></div>
<div class="group g-form"><div class="cols">
<div class="col"><button><svg><use href="#dimple"/></svg>Důlek</button><button><svg><use href="#louver"/></svg>Štěrbina</button><button><svg><use href="#punch"/></svg>Děrování</button></div>
<div class="col"><button><svg><use href="#extrude"/></svg>Vysunout</button><button><svg><use href="#hole"/></svg>Díra</button><button><svg><use href="#merge"/></svg>Sloučit tvary<svg class="tri"><use href="#tri"/></svg></button></div>
</div><h2>Tvarování</h2></div>
<div class="group g-bend"><div class="cols">
<div class="col"><button><svg><use href="#fold"/></svg>Svinout</button><button class="marked"><svg><use href="#unfold"/></svg>Rozvinout<span class="step">1</span></button><button><svg><use href="#smooth"/></svg>Vyhlazený</button></div>
<div class="col"><button><svg><use href="#linear"/></svg>Lineární rozvinutí</button><button><svg><use href="#chg"/></svg>Změnit ohyb</button><button><svg><use href="#info"/></svg>Zobrazit Info ohybu<svg class="tri"><use href="#tri"/></svg></button></div>
</div><h2>Ohyb</h2></div>
</section>

<section class="bar">
<i class="grip"></i>
<button class="hot" aria-label="Výběr"><svg><use href="#pick"/></svg></button>
<button class="slot" aria-label="Přidat"><svg><use href="#plus"/></svg></button>
<button class="slot" aria-label="Odebrat"><svg><use href="#minus"/></svg></button>
<button class="slot" aria-label="Výběr oknem"><svg><use href="#dsel"/></svg></button>
<svg class="tri wide"><use href="#tri"/></svg>
<button class="slot" aria-label="Výběr polygonem"><svg><use href="#dcirc"/></svg></button>
<i class="vsep"></i>
<button class="slot" aria-label="Filtr barev"><svg><use href="#rgb"/></svg></button>
<span class="combo c-filter"><select aria-label="Filtr"><option>Povrch</option></select><svg class="tri"><use href="#tri"/></svg></span>
<button class="hot" aria-label="Vrstvy"><svg><use href="#layerbtn"/></svg></button>
<span class="combo c-scope off"><select aria-label="Rozsah" disabled><option>Pouze díl</option></select><svg class="tri"><use href="#tri"/></svg></span>
<svg class="slot"><use href="#gref1"/></svg><svg class="slot"><use href="#gref2"/></svg>
<i class="vsep"></i>
<svg class="slot"><use href="#glist"/></svg><svg class="slot"><use href="#glist"/></svg><svg class="slot"><use href="#glist"/></svg><svg class="slot"><use href="#glist"/></svg><svg class="slot"><use href="#gcur"/></svg>
<button class="slot" aria-label="Seznam"><svg><use href="#rlist"/></svg></button>
<button class="slot" aria-label="Vybrat vše"><svg><use href="#rsel"/></svg></button>
<button class="slot" aria-label="Pohled"><svg><use href="#rball"/></svg></button>
<button class="slot" aria-label="Nastavení výběru"><svg><use href="#rgear"/></svg></button>
<i class="vsep"></i>
<svg class="slot"><use href="#gtarget"/></svg><svg class="slot"><use href="#gcurve"/></svg><svg class="slot"><use href="#gsq"/></svg>
<span class="combo c-norm off"><select aria-label="Směr" disabled><option>Normála</option></select><svg class="tri"><use href="#tri"/></svg></span>
<svg class="slot"><use href="#gpen"/></svg><svg class="slot"><use href="#ggear"/></svg><svg class="slot"><use href="#gplay"/></svg><svg class="slot"><use href="#gdots"/></svg><svg class="slot"><use href="#gline"/></svg><svg class="slot"><use href="#gmid"/></svg><svg class="slot"><use href="#gcen"/></svg><svg class="slot"><use href="#gquad"/></svg>
</section>

<main class="work">
<aside class="side">
<div class="side-title"><span>Rozvinout</span><button aria-label="Obnovit"><svg><use href="#restore"/></svg></button><button aria-label="Zavřít"><svg><use href="#close"/></svg></button></div>
<div class="side-body">
<div class="strip">
<button class="on" aria-label="Rozvinout"><svg><use href="#unfold"/></svg></button>
<button aria-label="Historie"><svg><use href="#tree"/></svg></button>
<button aria-label="Správce pohledů"><svg><use href="#winbox"/></svg></button>
<button aria-label="Vizuální správce"><svg><use href="#scene"/></svg></button>
<button aria-label="Uživatelé"><svg><use href="#users"/></svg></button>
</div>
<form class="form">
<div class="acts"><button type="button" aria-label="OK"><svg><use href="#check"/></svg></button><button type="button" aria-label="Storno"><svg><use href="#cross"/></svg></button><button type="button" aria-label="Použít"><svg><use href="#boxcheck"/></svg></button><i></i><button type="button" aria-label="Informace"><svg><use href="#iinfo"/></svg></button><button type="button" class="thin" aria-label="Rozbalit"><svg><use href="#lchev"/></svg></button></div>
<fieldset class="card"><h3><svg><use href="#bigtri"/></svg>Požadováno</h3>
<div class="row"><label for="shape">Tvar</label><input id="shape" value="S1"><svg class="dl green"><use href="#dl"/></svg></div>
</fieldset>
<fieldset class="card"><h3><svg><use href="#bigtri"/></svg>Nastavení</h3>
<div class="row picked"><label for="fix">Stacionární</label><span class="focus"><input id="fix" value="F8" size="2"></span><svg class="dl"><use href="#dl"/></svg><span class="step">2</span></div>
<div class="row"><label for="faces">Povrchy ohybu</label><input id="faces"><svg class="chev"><use href="#chev"/></svg><svg class="dl"><use href="#dl"/></svg></div>
<div class="row"><button type="button" class="collect">Shromaždit všechny ohyby</button></div>
<div class="row"><label for="curves">Křivky na plechu</label><input id="curves"><svg class="chev"><use href="#chev"/></svg><svg class="dl"><use href="#dl"/></svg></div>
</fieldset>
</form>
</div>
</aside>

<section class="doc">
<div class="doctabs"><button class="doctab">* Díl001.Z3PRT<svg viewBox="0 0 12 12"><path d="M1 1l10 10M11 1L1 11" stroke="#75653c" stroke-width="2.400"/></svg></button><button class="add" aria-label="Nová karta"><svg viewBox="0 0 12 12"><path d="M6 0v12M0 6h12" stroke="#a29d9d" stroke-width="2.200"/></svg></button></div>
<div class="view">
<svg class="model" viewBox="415 240 842 647" role="img" aria-label="Model plechového dílu">
<defs>
<linearGradient id="bend" x1="930" y1="576" x2="923" y2="600" gradientUnits="userSpaceOnUse"><stop offset="0" stop-color="#78929c"/><stop offset="1" stop-color="#92b4c2"/></linearGradient>
<linearGradient id="bend2" x1="930" y1="590" x2="925" y2="606" gradientUnits="userSpaceOnUse"><stop offset="0" stop-color="#7c949e"/><stop offset="1" stop-color="#9dbfcd"/></linearGradient>
<clipPath id="yclip"><path d="M1010 730h14v30h-14z"/></clipPath>
</defs>
<path d="M719.500 290L733 281.500 1100 392l-14 8z" fill="#9cbdca"/>
<path d="M719.500 290L1086 400l43 236L763 528z" fill="#7a929b"/>
<path d="M1086 400l14-8 44 236q2 32-22 52l-4-17q12-12 11-27z" fill="#829fab"/>
<path d="M763 528l366 108-2 16L762 542z" fill="url(#bend)"/>
<path d="M762 542l365 110-9 11-366-110z" fill="url(#bend2)"/>
<path d="M563 662l367 111 3 17-366-110z" fill="#7a929b"/>
<path d="M930 773l188-110 4 17-189 110z" fill="#829fab"/>
<path d="M752 553l366 110-188 110-367-111z" fill="#ebeb00"/>
<g fill="none" stroke="#ffa000" stroke-opacity=".3" stroke-width="3">
<path d="M733 282l44 237 367 109M777 519l-14 9M777 519q3 26-22 51l367 110M755 570L567 680M755 570l-3-17M961 574q2 30-22 53"/></g>
<path d="M1061 603l12 62-51 30 49 14" fill="none" stroke="#a99400" stroke-opacity=".55"/>
<path d="M1122 680l-74-22" stroke="#d88912" stroke-width="1.500"/>
<path d="M1046 657l16 1-3 6z" fill="#dca400"/><path d="M1025 652l12 0-3 6z" fill="#c9ba05"/>
<g fill="none" stroke="#ff9a00" stroke-width="3" stroke-linejoin="round">
<path d="M719.500 290L733 281.500 1100 392l44 236q4 35-22 52L933 790 567 680l-4-18M719.500 290L1086 400l14-8M719.500 290L763 528l366 108-43-236M1129 636l15-8M763 528q4 18-11 25M762 542l365 110M1129 636q1 18-11 27l4 17M930 773l3 17M946 583l-2 14-7 10"/></g>
<path d="M752 553l366 110-188 110-367-111z" fill="none" stroke="#ffff00" stroke-width="3" stroke-linejoin="round"/>
<path d="M1111 618l-50-15 10 50M1111 618l-51 28 11 63M1122 680l-20-112" fill="none" stroke="#9b651b" stroke-width="1.200"/>
<path d="M1118 660l-11-60" stroke="#2929c8" stroke-width="1.500"/>
<path d="M1104 583l7 15q-3 3-9 1z" fill="#1212dc"/><path d="M1098 555l6 12q-3 3-7 1z" fill="#b8741b" stroke="#673d0a" stroke-width=".6"/>
<path d="M1045 725l12-10q3 3 2 6z" fill="#229d14" stroke="#145e0d" stroke-width=".7"/><path d="M1023 737l8-7q3 2 3 4z" fill="#b97318" stroke="#724306" stroke-width=".6"/>
<text x="1090" y="549" class="axis" fill="#8f6122">Z</text>
<text x="1006" y="753" class="axis" fill="#946010" clip-path="url(#yclip)">Y</text>
<path d="M502 880l-13 7" stroke="#22cc22" stroke-width="1.500"/>
<path d="M502 880l-10-58" stroke="#0a0aff" stroke-width="2"/><path d="M502 880l-43-12" stroke="#ff0808" stroke-width="2"/>
<path d="M491 822l6 12-3 2-4-1z" fill="#1414c8"/><path d="M456 868l11-3q1 4-1 8z" fill="#b40a0a"/>
<text x="484" y="820" class="axis" fill="#0a0aff">Z</text><text x="444" y="872" class="axis" fill="#ff0808">X</text>
</svg>
<div class="viewbar">
<button class="cell" aria-label="Konec"><svg><use href="#exit"/></svg></button>
<button class="cell drop" aria-label="Pohledy"><svg><use href="#views"/></svg><svg class="tri"><use href="#tri"/></svg></button>
<button class="cell" aria-label="Guma"><svg><use href="#eraser"/></svg></button>
<button class="cell" aria-label="Kolmo"><svg><use href="#topface"/></svg></button>
<button class="cell drop" aria-label="Stínování"><svg><use href="#shade"/></svg><svg class="tri"><use href="#tri"/></svg></button>
<button class="cell drop" aria-label="Drátěný model"><svg><use href="#wire"/></svg><svg class="tri"><use href="#tri"/></svg></button>
<button class="cell drop" aria-label="Síť"><svg><use href="#mesh"/></svg><svg class="tri"><use href="#tri"/></svg></button>
<button class="cell drop" aria-label="Lupa"><svg><use href="#zoomp"/></svg><svg class="tri"><use href="#tri"/></svg></button>
<button class="cell drop" aria-label="Střed otáčení"><svg><use href="#pivot"/></svg><svg class="tri"><use href="#tri"/></svg></button>
<button class="cell" aria-label="Přizpůsobit"><svg><use href="#fit"/></svg></button>
<button class="cell drop" aria-label="Kóty"><svg><use href="#dim"/></svg><svg class="tri"><use href="#tri"/></svg></button>
<button class="cell drop" aria-label="Obrazovka"><svg><use href="#screen"/></svg><svg class="tri"><use href="#tri"/></svg></button>
<button class="cell" aria-label="Barva hran"><svg><use href="#black"/></svg></button>
<button class="cell" aria-label="Barva ploch"><svg><use href="#light"/></svg></button>
<button class="cell drop" aria-label="Hladiny"><svg><use href="#layers"/></svg><svg class="tri"><use href="#tri"/></svg></button>
<span class="combo c-layer off"><svg class="bulb"><use href="#bulb"/></svg><select aria-label="Hladina" disabled><option>Hladina000</option></select><svg class="tri"><use href="#tri"/></svg></span>
</div>
<div class="hint"><p>&lt;pravý-klik&gt; pro volby zadání entity.</p><p>&lt;F8&gt; nebo &lt;Shift-roll&gt; pro nalezení dalšího platného nastavení filtru.</p></div>
</div>
</section>
</main>
</body>
</html>
```
FILE: styles.css
```css
* { box-sizing: border-box; }
body {
  margin: 0;
  height: 100vh;
  display: flex;
  flex-direction: column;
  overflow: hidden;
  background: #e1e5e9;
  color: #111;
  font: 14px/20px "Open Sans", "Noto Sans", sans-serif;
}
button, select, input { font: inherit; color: inherit; }
button { border: 0; padding: 0; background: none; white-space: nowrap; }
h2, h3, p { margin: 0; font: inherit; }
svg { display: block; flex: none; }
.sprite { position: absolute; width: 0; height: 0; }

.slot { width: 28px; height: 20px; flex: none; display: grid; place-items: center; }
.slot svg { width: 20px; height: 20px; }
.slot.narrow { width: 18px; }
.tri { width: 10px; height: 10px; color: #333; }

/* quick access and menu */
.quick { flex: none; display: flex; align-items: center; height: 33px; padding-left: 1px; }
.qsep { flex: none; width: 1px; height: 14px; margin-right: 6px; background: #a5a9ad; }
.menu { display: flex; gap: 18px; margin-left: 11px; }
.menu a { color: #000; text-decoration: none; white-space: nowrap; }

/* ribbon tabs */
.tabs { flex: none; display: flex; height: 27px; padding-left: 1px; border-bottom: 1px solid #b9bec9; }
.tabs button { flex: none; padding: 0 10px; color: #4b4b4b; border: 1px solid transparent; border-bottom: 0; }
.tabs .file { width: 91px; margin-right: 1px; background: #2a63b6; border-color: #15479a; color: #fff; }
.tabs .on { position: relative; height: 27px; margin: 0 2px 0 4px; padding: 0 9px; background: #fcfcfc; border-color: #b9bec9; color: #4a5568; }

/* ribbon */
.ribbon { flex: none; display: flex; height: 119px; padding-top: 5px; background: #fcfcfc; border-bottom: 1px solid #b9bec9; overflow: hidden; }
.group { flex: none; display: flex; flex-direction: column; height: 111px; border-right: 1px solid #cdd1d8; }
.cols { flex: 1; display: flex; }
.col { flex: none; }
.col button { display: flex; align-items: center; height: 29px; color: #1c1c1c; }
.col button svg { width: 20px; height: 20px; margin-right: 4px; }
.col button .tri { width: 10px; height: 10px; margin: 0 0 0 7px; }
.group h2 { height: 24px; padding-right: 8px; line-height: 24px; text-align: center; color: #6c7280; }
.g-base { width: 166px; padding-left: 12px; }
.g-flange { width: 304px; padding-left: 8px; }
.g-flange .col:first-child { width: 152px; }
.g-edit { width: 163px; padding-left: 8px; }
.g-corner { width: 115px; padding-left: 8px; }
.g-form { width: 233px; padding-left: 8px; }
.g-form .col:first-child { width: 94px; }
.g-bend { width: 505px; padding-left: 8px; }
.g-bend .col:first-child { width: 100px; }

.marked, .picked { position: relative; z-index: 1; }
.marked::after, .picked::after { content: ""; position: absolute; border: 5px solid #ec1c24; pointer-events: none; }
.marked::after { inset: -4px -10px -2px -7px; border-radius: 9px; }
.step { position: absolute; color: #ee3b44; font-size: 18px; }
.marked .step { left: -22px; }

/* selection toolbar */
.bar { flex: none; display: flex; align-items: center; height: 34px; padding: 2px 0 0 5px; overflow: hidden; }
.grip { flex: none; width: 2px; height: 20px; margin-right: 5px; background: repeating-linear-gradient(#7c8398 0 2px, transparent 2px 4px); }
.hot { flex: none; width: 27px; height: 26px; display: grid; place-items: center; background: #ffe080; border: 1px solid #c49a3c; }
.hot svg { width: 20px; height: 20px; }
.tri.wide { width: 15px; }
.vsep { flex: none; width: 1px; height: 20px; margin: 0 3px 0 4px; background: #bfc3c8; }
.combo { flex: none; display: grid; grid-template-columns: 1fr 20px; align-items: center; height: 26px; background: #fff; border: 1px solid #c0c5cf; }
.combo select { grid-area: 1 / 1 / 2 / 3; width: 100%; height: 100%; padding: 0 3px; appearance: none; border: 0; background: none; opacity: 1; color: #000; outline: 0; }
.combo .tri { grid-area: 1 / 2; pointer-events: none; justify-self: center; }
.combo.off { background: #efefef; border-color: #d3d7de; }
.combo.off select { color: #7d7d7d; }
.combo.off .tri { color: #a8a8a8; }
.c-filter { width: 121px; margin: 0 1px; }
.c-scope { width: 165px; margin: 0 1px; }
.c-norm { width: 120px; margin: 0 1px; }

/* left panel */
.work { flex: 1; min-height: 0; display: flex; }
.side { flex: none; width: 412px; display: flex; flex-direction: column; border-right: 1px solid #b9bec9; }
.side-title { display: flex; height: 27px; align-items: center; padding: 0 3px 0 5px; border-bottom: 1px solid #b9bec9; color: #3c3c3c; }
.side-title span { flex: 1; }
.side-title button { width: 24px; display: grid; place-items: center; }
.side-title svg { width: 20px; height: 20px; }
.side-body { flex: 1; display: flex; padding-left: 2px; }
.strip { flex: none; width: 38px; display: flex; flex-direction: column; border-right: 1px solid #b9bec9; }
.strip button { height: 60px; display: grid; place-items: center; }
.strip svg { width: 30px; height: 30px; }
.strip .on { height: 58px; background: #fcfcfc; border: 1px solid #b9bec9; border-width: 0 0 1px 1px; }
.form { flex: 1; min-width: 0; padding: 4px 4px 0 3px; background: #dde1e8; }
.acts { display: flex; gap: 2px; }
.acts i { flex: 1; }
.acts button { width: 33px; height: 28px; display: grid; place-items: center; background: #fcfcfc; border: 1px solid #b9bec9; }
.acts .thin { width: 17px; }
.acts svg { width: 20px; height: 20px; }
.acts .thin svg { width: 12px; }
.card { min-width: 0; margin: 4px 2px 0; padding: 0 0 3px; border: 1px solid #bcc1c9; }
.card + .card { margin-top: 2px; padding-bottom: 1px; }
.card h3 { display: flex; align-items: center; gap: 4px; height: 29px; padding-left: 1px; background: #fcfcfc; border-bottom: 1px solid #bcc1c9; color: #333; font-weight: 600; }
.card h3 svg { width: 16px; height: 16px; color: #4c5058; }
.row { display: flex; align-items: center; height: 31px; padding: 0 8px; }
.card h3 + .row { height: 36px; padding-top: 4px; }
.card h3 + .picked { height: 34px; padding-top: 2px; }
.row label { width: 117px; white-space: nowrap; }
.row input { flex: 1; min-width: 0; height: 27px; padding: 0 3px; background: #fdfdfd; border: 1px solid #bcc1c9; outline: 0; }
.row .dl { width: 20px; height: 20px; margin: 0 4px; color: #a3ad3c; fill: #f0a41e; }
.row .dl.green { color: #3fae4c; fill: #3fd42f; }
.row .chev { width: 20px; height: 20px; margin: 0 4px; }
.row .focus { flex: 1; display: flex; align-items: center; height: 29px; padding-left: 3px; background: #fdfdfd; border: 1px solid #0a7fe0; }
.row .focus input { flex: none; width: 16px; height: 20px; padding: 0; border: 0; background: #0a74d8; color: #fff; }
.picked::after { inset: -3px 3px -4px -4px; border-radius: 20px / 12px; }
.picked .step { left: 371px; }
.collect { flex: 1; height: 29px; margin: 0 0 0 116px; background: #fcfcfc; border: 1px solid #bcc1c9; }

/* document area */
.doc { flex: 1; min-width: 0; display: flex; flex-direction: column; margin-left: 2px; border-left: 1px solid #b9bec9; }
.doctabs { display: flex; height: 27px; border-bottom: 1px solid #b9bec9; }
.doctab { display: flex; align-items: center; justify-content: flex-end; gap: 8px; width: 175px; height: 27px; padding-right: 18px; background: #fcfcfc; border: 1px solid #b9bec9; border-width: 1px 1px 0 0; color: #000; }
.doctab svg, .add svg { width: 12px; height: 12px; }
.add { padding: 0 8px; }
.view { position: relative; flex: 1; overflow: hidden; background: linear-gradient(#fefefe 0, #f8f8f8 6%, #dfdfdf 40%, #b7b7b7 87%, #aaa 100%); }
.model { position: absolute; inset: 0; width: 100%; height: 100%; }
.axis { font: 20px "Open Sans", sans-serif; }
.viewbar { position: relative; display: flex; align-items: center; height: 31px; padding-left: 128px; }
.cell { flex: none; display: flex; align-items: center; width: 29px; padding-left: 4px; }
.cell svg { width: 20px; height: 20px; }
.cell.drop { width: 44px; }
.cell .tri { width: 10px; height: 10px; margin-left: 4px; }
.c-layer { width: 143px; grid-template-columns: 43px 1fr 14px; }
.c-layer select { grid-area: 1 / 2; }
.c-layer .tri { grid-area: 1 / 3; }
.bulb { width: 30px; height: 20px; margin-left: 7px; grid-area: 1 / 1; }
.hint { position: relative; margin-top: -6px; padding-left: 21px; font-family: "Noto Sans", "Open Sans", sans-serif; line-height: 26px; }
.hint p { white-space: nowrap; }
```
